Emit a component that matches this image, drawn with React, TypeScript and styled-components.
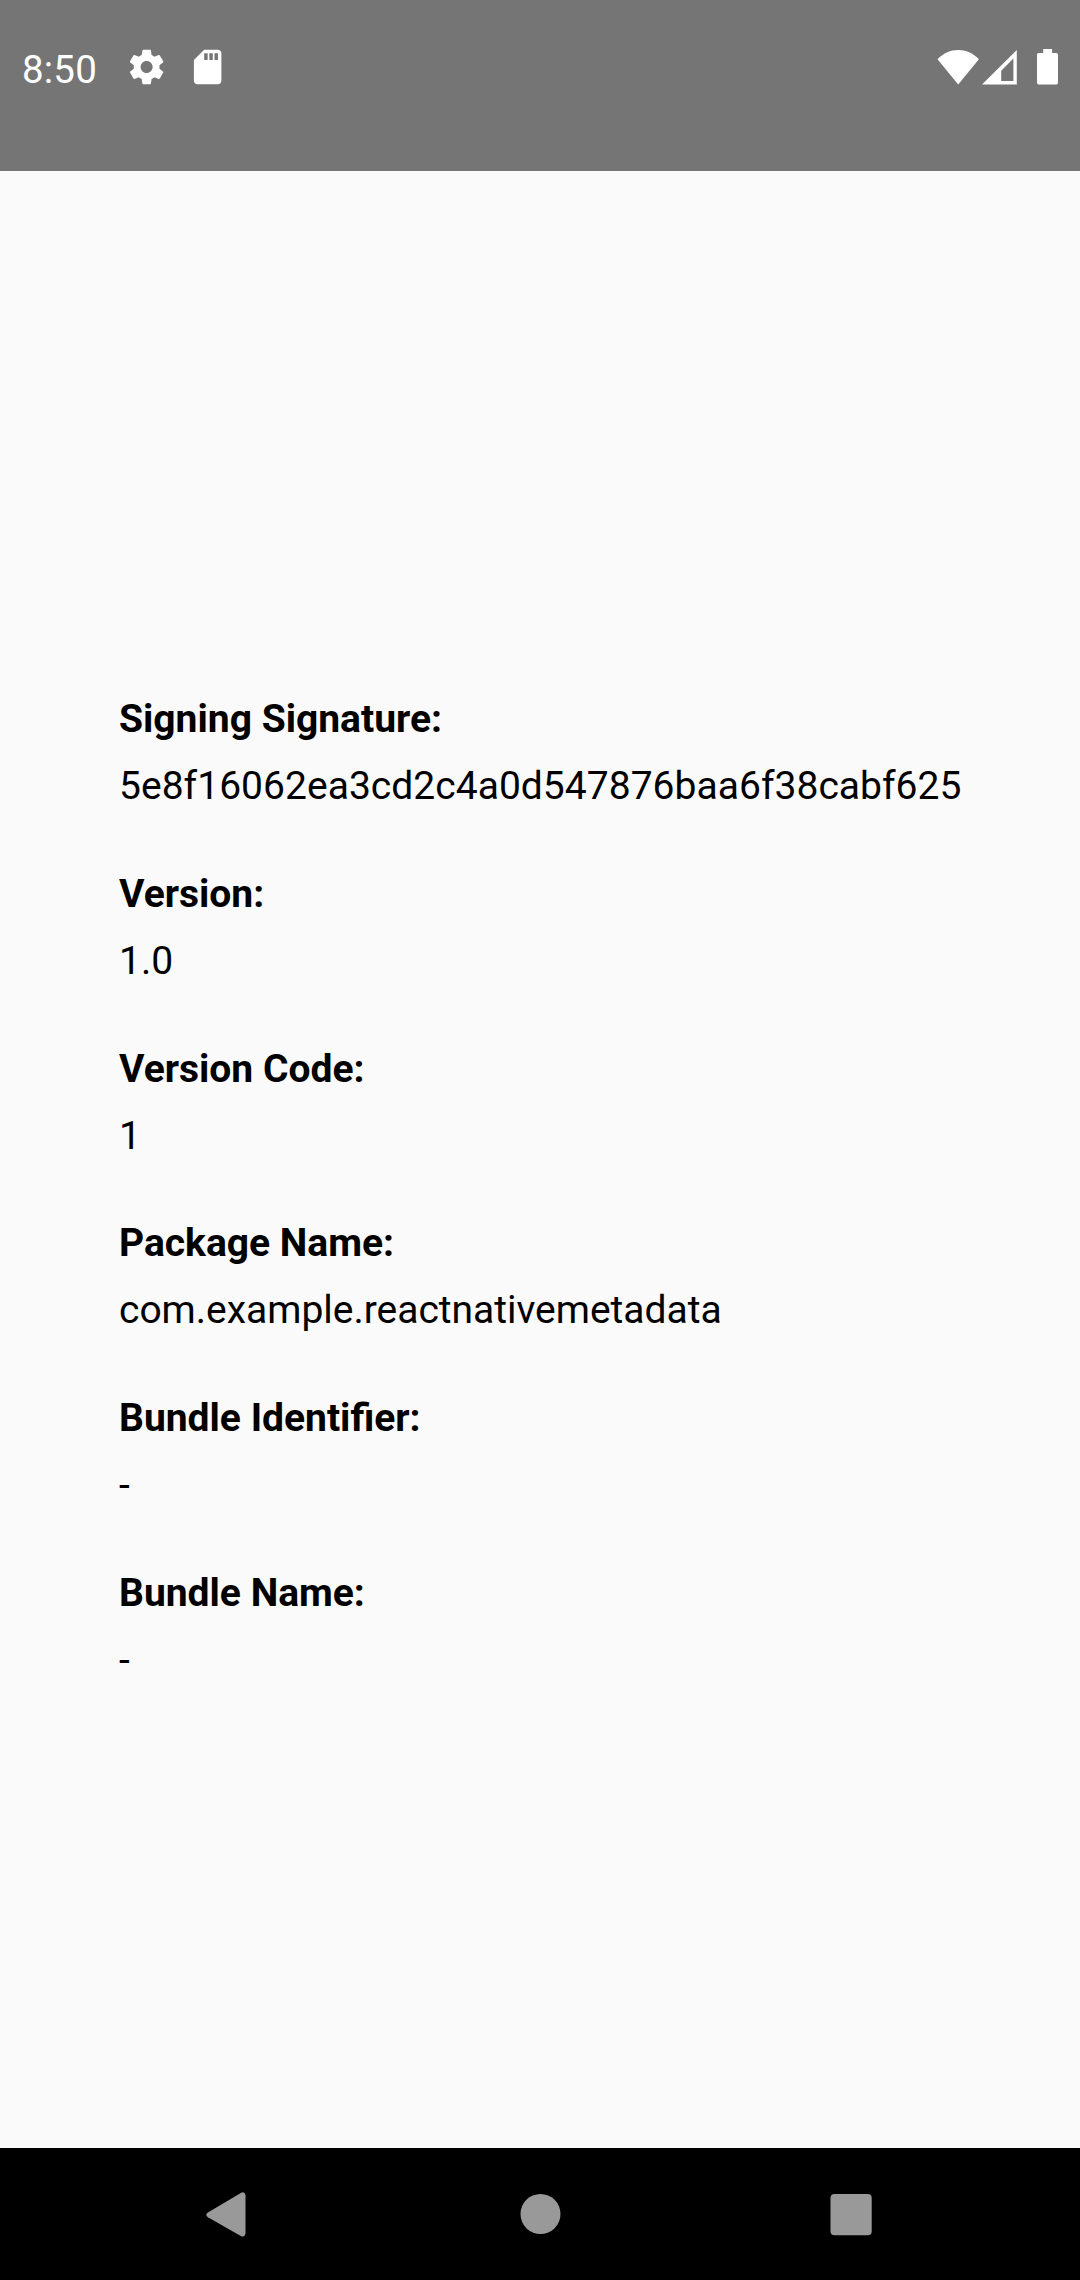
import React from 'react';
import styled, { createGlobalStyle } from 'styled-components';

const GlobalStyle = createGlobalStyle`
  body {
    margin: 0;
    background: #fafafa;
  }
`;

const Screen = styled.div`
  display: flex;
  flex-direction: column;
  width: 1080px;
  height: 2280px;
  background: #fafafa;
  color: #000;
  font-family: Roboto, 'Noto Sans', sans-serif;
  font-size: 39px;
  overflow: hidden;
`;

const StatusBar = styled.header`
  box-sizing: border-box;
  display: flex;
  justify-content: space-between;
  align-items: flex-start;
  height: 171px;
  padding: 46px 21px 0 22px;
  background: #757575;
  color: #fff;
`;

const StatusGroup = styled.div<{ $gap?: number }>`
  display: flex;
  align-items: center;
  height: 42px;
  gap: ${({ $gap }) => $gap ?? 0}px;
`;

const Clock = styled.time`
  width: 103.5px;
  font-size: 38.5px;
  letter-spacing: 0.2px;
  line-height: 46px;
  padding-top: 5px;
`;

const Icon = styled.svg`
  display: block;
  flex: none;
  fill: currentColor;
`;

const Content = styled.main`
  flex: 1;
  display: flex;
  flex-direction: column;
  gap: 56.75px;
  padding: 523px 0 0 119px;
`;

const Field = styled.section`
  display: flex;
  flex-direction: column;
  gap: 16px;
`;

const Label = styled.div`
  font-weight: 700;
  line-height: 51px;
`;

const Value = styled.div<{ $tracking?: number }>`
  line-height: 51px;
  letter-spacing: ${({ $tracking }) => $tracking ?? 0}px;
  white-space: nowrap;
`;

const NavBar = styled.nav`
  box-sizing: border-box;
  display: flex;
  justify-content: center;
  align-items: center;
  gap: 124px;
  height: 132px;
  background: #000;
  color: #999;
`;

const NavButton = styled.button`
  display: flex;
  padding: 0;
  border: 0;
  background: none;
  color: inherit;
`;

const fields = [
  { label: 'Signing Signature:', value: '5e8f16062ea3cd2c4a0d547876baa6f38cabf625', tracking: 0.03 },
  { label: 'Version:', value: '1.0' },
  { label: 'Version Code:', value: '1' },
  { label: 'Package Name:', value: 'com.example.reactnativemetadata', tracking: -0.02 },
  { label: 'Bundle Identifier:', value: '-' },
  { label: 'Bundle Name:', value: '-' },
];

export default function App() {
  return (
    <>
      <GlobalStyle />
      <Screen>
        <StatusBar>
          <StatusGroup>
            <Clock>8:50</Clock>
            <StatusGroup $gap={20}>
              <Icon width="41.25" height="41.25" viewBox="0 -0.2 24 24">
                <path d="M19.43 12.98c.04-.32.07-.64.07-.98s-.03-.66-.07-.98l2.11-1.65c.19-.15.24-.42.12-.64l-2-3.46c-.12-.22-.39-.3-.61-.22l-2.49 1c-.52-.4-1.08-.73-1.69-.98l-.38-2.65C14.46 2.18 14.25 2 14 2h-4c-.25 0-.46.18-.49.42l-.38 2.65c-.61.25-1.17.59-1.69.98l-2.49-1c-.23-.09-.49 0-.61.22l-2 3.46c-.13.22-.07.49.12.64l2.11 1.65c-.04.32-.07.65-.07.98s.03.66.07.98l-2.11 1.65c-.19.15-.24.42-.12.64l2 3.46c.12.22.39.3.61.22l2.49-1c.52.4 1.08.73 1.69.98l.38 2.65c.03.24.24.42.49.42h4c.25 0 .46-.18.49-.42l.38-2.65c.61-.25 1.17-.59 1.69-.98l2.49 1c.23.09.49 0 .61-.22l2-3.46c.12-.22.07-.49-.12-.64l-2.11-1.65zM12 15.5c-1.93 0-3.5-1.57-3.5-3.5s1.57-3.5 3.5-3.5 3.5 1.57 3.5 3.5-1.57 3.5-3.5 3.5z" />
              </Icon>
              <Icon width="41.25" height="41.25" viewBox="0 -0.2 24 24">
                <path d="M18 2h-8L4.02 8 4 20c0 1.1.9 2 2 2h12c1.1 0 2-.9 2-2V4c0-1.1-.9-2-2-2zm-6 6h-2V4h2v4zm3 0h-2V4h2v4zm3 0h-2V4h2v4z" />
              </Icon>
            </StatusGroup>
          </StatusGroup>
          <StatusGroup>
            <Icon width="44" height="42" viewBox="0 0 44 42">
              <path d="M1.5 13.2C7.5 7 14.5 4 22.2 4s14.7 3 20.7 9.2L22.2 38.5z" />
            </Icon>
            <Icon width="44" height="42" viewBox="0 0 44 42">
              <path fillRule="evenodd" d="M36.8 4v34.5H2zM33.4 12.6 21.2 24.8V35h12.2z" />
            </Icon>
            <Icon width="35" height="42" viewBox="0 0 35 42">
              <path d="M19.2 3h8.9v4h4.2q1.7 0 1.7 1.7v28.1q0 1.7-1.7 1.7H14.7q-1.7 0-1.7-1.7V8.7q0-1.7 1.7-1.7h4.5z" />
            </Icon>
          </StatusGroup>
        </StatusBar>

        <Content>
          {fields.map(({ label, value, tracking }) => (
            <Field key={label}>
              <Label>{label}</Label>
              <Value $tracking={tracking}>{value}</Value>
            </Field>
          ))}
        </Content>

        <NavBar>
          <NavButton aria-label="Back">
            <Icon width="187" height="60" viewBox="0 0 187 60">
              <path d="M71.9 28.6 104.8 8.9q4-1.8 4.7 2.3v38.4q-.7 4.1-4.7 2.3L71.9 33.2q-3.4-2.3 0-4.6z" />
            </Icon>
          </NavButton>
          <NavButton aria-label="Home">
            <Icon width="187" height="60" viewBox="0 0 187 60">
              <circle cx="93.5" cy="30" r="20" />
            </Icon>
          </NavButton>
          <NavButton aria-label="Recent apps">
            <Icon width="187" height="60" viewBox="0 0 187 60">
              <rect x="72.5" y="10" width="41.2" height="41.2" rx="4" />
            </Icon>
          </NavButton>
        </NavBar>
      </Screen>
    </>
  );
}
